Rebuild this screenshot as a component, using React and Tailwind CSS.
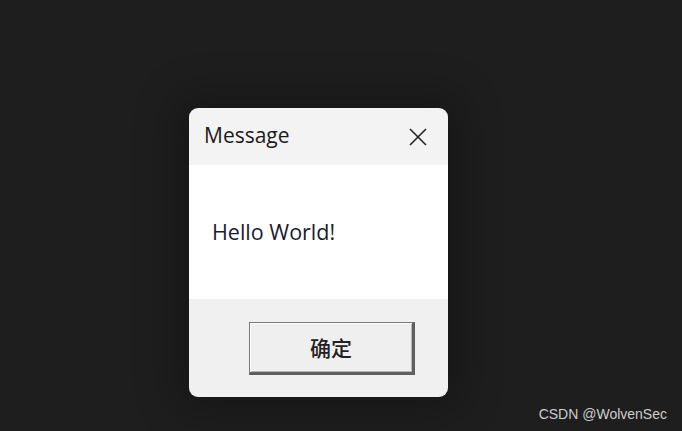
export default function App() {
  return (
    <div className="relative w-[682px] h-[431px] bg-[#1e1e1e] overflow-hidden">
      <div className="pt-[108px] pl-[189px]">
        <div className="w-[259px] h-[289px] rounded-[9px] overflow-hidden flex flex-col shadow-[0_0_40px_14px_rgba(0,0,0,0.25)] font-['Open_Sans',sans-serif] text-[#1b1b1b]">
          <div className="h-[57px] bg-[#f3f3f3] flex items-center justify-between pl-[15px] pr-[21px]">
            <span className="text-[21px] leading-none -mt-[2px]">Message</span>
            <svg width="18" height="18" viewBox="0 0 18 18" className="mt-[1px]">
              <path d="M1 1 L17 17 M17 1 L1 17" stroke="#222" strokeWidth="1.6" fill="none" />
            </svg>
          </div>
          <div className="h-[134px] bg-white flex items-center pl-[23px]">
            <span className="text-[21.5px] leading-none text-[#1d1a33]">Hello World!</span>
          </div>
          <div className="flex-1 bg-[#f0f0f0] pt-[23px] pl-[60px]">
            <div className="w-[166px] h-[53px] bg-[#efefef] border-t border-l border-[#7a7a7a] border-r-[3px] border-b-[3px] border-r-[#5f5f5f] border-b-[#5f5f5f] shadow-[inset_1px_1px_0_#fdfdfd,inset_-1px_-1px_0_#b8b8b8] flex items-center justify-center">
              <span className="text-[21px] leading-none font-medium font-['Noto_Sans_CJK_SC',sans-serif] text-[#222]">确定</span>
            </div>
          </div>
        </div>
      </div>
      <div className="absolute right-[15px] bottom-[10px] text-[14px] leading-none text-[#cdcdcd] font-['Liberation_Sans',Arial,sans-serif]">
        CSDN @WolvenSec
      </div>
    </div>
  );
}
